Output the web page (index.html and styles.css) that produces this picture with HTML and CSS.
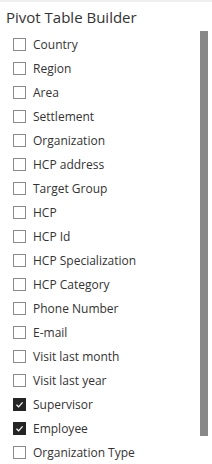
FILE: index.html
```html
<!DOCTYPE html>
<html lang="en">
<head>
  <meta charset="UTF-8">
  <meta name="viewport" content="width=device-width, initial-scale=1.0">
  <title>Pivot Table Builder</title>
  <link rel="stylesheet" href="styles.css">
</head>
<body>
  <div class="panel">
    <h1 class="heading">Pivot Table Builder</h1>
    <div class="body">
      <div class="fields">
        <label class="field"><span class="box"></span>Country</label>
        <label class="field"><span class="box"></span>Region</label>
        <label class="field"><span class="box"></span>Area</label>
        <label class="field"><span class="box"></span>Settlement</label>
        <label class="field"><span class="box"></span>Organization</label>
        <label class="field"><span class="box"></span>HCP address</label>
        <label class="field"><span class="box"></span>Target Group</label>
        <label class="field"><span class="box"></span>HCP</label>
        <label class="field"><span class="box"></span>HCP Id</label>
        <label class="field"><span class="box"></span>HCP Specialization</label>
        <label class="field"><span class="box"></span>HCP Category</label>
        <label class="field"><span class="box"></span>Phone Number</label>
        <label class="field"><span class="box"></span>E-mail</label>
        <label class="field"><span class="box"></span>Visit last month</label>
        <label class="field"><span class="box"></span>Visit last year</label>
        <label class="field"><span class="box checked"><svg viewBox="0 0 13 13" width="13" height="13"><path d="M3.5 6.8 L5.6 8.8 L9.6 4.3" fill="none" stroke="#fff" stroke-width="1.2"/></svg></span>Supervisor</label>
        <label class="field"><span class="box checked"><svg viewBox="0 0 13 13" width="13" height="13"><path d="M3.5 6.8 L5.6 8.8 L9.6 4.3" fill="none" stroke="#fff" stroke-width="1.2"/></svg></span>Employee</label>
        <label class="field"><span class="box"></span>Organization Type</label>
      </div>
      <div class="scrollbar">
        <div class="thumb"></div>
      </div>
    </div>
  </div>
</body>
</html>
```

FILE: styles.css
```css
body {
  margin: 0px;
  background-color: #fff;
  font-family: "Open Sans", "Noto Sans", sans-serif;
  color: #333;
}
.panel {
  border-top: 2px solid #efefef;
  height: 462px;
  overflow: hidden;
}
.heading {
  margin: 0;
  padding: 5px 0 0 6px;
  height: 24px;
  font-size: 15px;
  font-weight: normal;
  line-height: 20px;
  color: #333;
}
.body {
  display: flex;
}
.fields {
  flex: 1;
  display: flex;
  flex-direction: column;
  padding-top: 1px;
}
.field {
  display: flex;
  align-items: center;
  gap: 7px;
  height: 24px;
  padding-left: 13px;
  font-size: 12px;
}
.box {
  width: 11px;
  height: 11px;
  border: 1px solid #8a8a8a;
  background: #fff;
  display: flex;
  align-items: center;
  justify-content: center;
}
.box.checked {
  background: #252525;
  border-color: #252525;
}
.box svg {
  flex: none;
}
.scrollbar {
  width: 8px;
  margin-right: 4px;
}
.thumb {
  height: 405px;
  background: #888;
}
```
